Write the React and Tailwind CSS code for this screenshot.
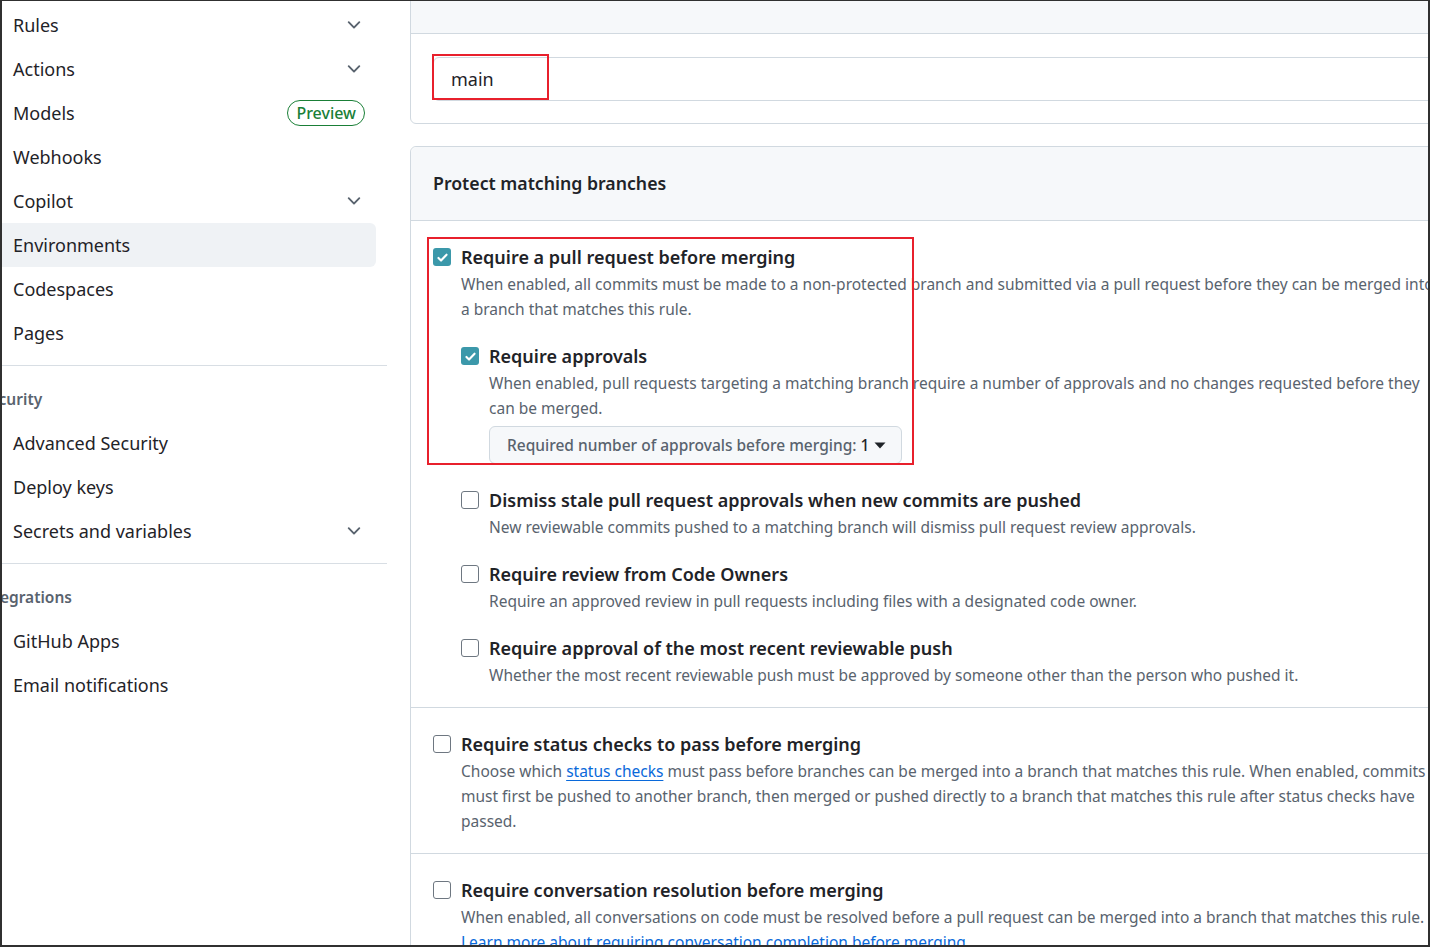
import React from 'react';

const font = { fontFamily: '"Noto Sans", "Open Sans", sans-serif' };

const Chevron = () => (
  <svg width="20" height="20" viewBox="0 0 16 16" fill="#59636e">
    <path d="M12.78 5.22a.749.749 0 0 1 0 1.06l-4.25 4.25a.749.749 0 0 1-1.06 0L3.22 6.28a.749.749 0 1 1 1.06-1.06L8 8.94l3.72-3.72a.749.749 0 0 1 1.06 0Z" />
  </svg>
);

function NavItem({ label, chevron, badge, active }) {
  return (
    <div
      className={`h-[44px] mr-[11px] pl-[11px] pr-[12px] flex items-center justify-between rounded-r-md text-[18px] text-[#1f2328] ${
        active ? 'bg-[#eff2f5]' : ''
      }`}
    >
      <span>{label}</span>
      {chevron && <Chevron />}
      {badge && (
        <span className="h-[26px] px-[8px] mr-[-1px] flex items-center rounded-full border border-[#1a7f37] text-[#1a7f37] text-[16px] font-medium">
          {badge}
        </span>
      )}
    </div>
  );
}

function NavHeading({ label, offset }) {
  return (
    <div className={`h-[44px] pt-[2px] flex items-center text-[15.5px] font-semibold text-[#59636e] ${offset}`}>
      {label}
    </div>
  );
}

function Sidebar() {
  return (
    <div className="w-[385px] shrink-0 overflow-hidden pt-[2px]">
      <NavItem label="Rules" chevron />
      <NavItem label="Actions" chevron />
      <NavItem label="Models" badge="Preview" />
      <NavItem label="Webhooks" />
      <NavItem label="Copilot" chevron />
      <NavItem label="Environments" active />
      <NavItem label="Codespaces" />
      <NavItem label="Pages" />
      <div className="h-px bg-[#d8dee4] mt-[10px] mb-[11px]" />
      <NavHeading label="Security" offset="ml-[-21px]" />
      <NavItem label="Advanced Security" />
      <NavItem label="Deploy keys" />
      <NavItem label="Secrets and variables" chevron />
      <div className="h-px bg-[#d8dee4] mt-[10px] mb-[11px]" />
      <NavHeading label="Integrations" offset="ml-[-24px]" />
      <NavItem label="GitHub Apps" />
      <NavItem label="Email notifications" />
    </div>
  );
}

function Checkbox({ checked }) {
  if (checked) {
    return (
      <span className="w-[18px] h-[18px] shrink-0 rounded-[3px] bg-[#3b98aa] flex items-center justify-center">
        <svg width="13" height="13" viewBox="0 0 16 16" fill="none" stroke="white" strokeWidth="2.6" strokeLinecap="round" strokeLinejoin="round">
          <path d="M3 8.5l3.2 3.2L13 4.5" />
        </svg>
      </span>
    );
  }
  return <span className="w-[18px] h-[18px] shrink-0 rounded-[3px] border-[1.5px] border-[#6e7781] bg-white" />;
}

function Option({ checked, label, lines, children }) {
  return (
    <div>
      <div className="flex items-center gap-[10px] h-[26px]">
        <Checkbox checked={checked} />
        <span className="text-[18px] font-semibold text-[#1f2328] whitespace-nowrap">{label}</span>
      </div>
      <div className="pl-[28px] mt-[2px] text-[15.5px] leading-[25px] text-[#59636e]">
        {lines.map((l, i) => (
          <div key={i} className="whitespace-nowrap">
            {l}
          </div>
        ))}
        {children}
      </div>
    </div>
  );
}

function Main() {
  return (
    <div className="ml-[23px] w-[1100px] shrink-0">
      {/* branch name pattern box */}
      <div className="mt-[-21px] border border-[#d1d9e0] rounded-md bg-white">
        <div className="h-[53px] bg-[#f6f8fa] border-b border-[#d1d9e0] rounded-t-md" />
        <div className="px-[22px] pt-[23px] pb-[22px]">
          <div className="relative h-[44px] border border-[#d1d9e0] rounded-md flex items-center pl-[17px] text-[18px] text-[#1f2328]">
            main
            <div className="absolute left-[-2px] top-[-4px] w-[117px] h-[46px] border-2 border-[#e8202c]" />
          </div>
        </div>
      </div>

      {/* protect matching branches */}
      <div className="mt-[22px] border border-[#d1d9e0] rounded-t-md bg-white">
        <div className="h-[74px] bg-[#f6f8fa] border-b border-[#d1d9e0] rounded-t-md flex items-center px-[22px]">
          <span className="text-[17.7px] font-semibold text-[#1f2328]">Protect matching branches</span>
        </div>

        <div className="relative px-[22px] pt-[23px] pb-[19px] border-b border-[#d1d9e0]">
          <div className="absolute left-[16px] top-[16px] w-[487px] h-[228px] border-2 border-[#e8202c] pointer-events-none" />
          <Option
            checked
            label="Require a pull request before merging"
            lines={[
              'When enabled, all commits must be made to a non-protected branch and submitted via a pull request before they can be merged into',
              'a branch that matches this rule.',
            ]}
          >
            <div className="flex flex-col gap-[21px] mt-[21px]">
              <Option
                checked
                label="Require approvals"
                lines={[
                  'When enabled, pull requests targeting a matching branch require a number of approvals and no changes requested before they',
                  'can be merged.',
                ]}
              >
                <div className="mt-[5px] mb-[2px] w-[413px] h-[38px] rounded-md border border-[#d1d9e0] bg-[#f6f8fa] flex items-center pl-[17px] gap-[5px] text-[15.5px] font-medium text-[#59636e]">
                  <span>Required number of approvals before merging:</span>
                  <span className="text-[#1f2328] ml-[-1px]">1</span>
                  <svg width="12" height="7" viewBox="0 0 12 7" fill="#1f2328">
                    <polygon points="0.5,0.5 11.5,0.5 6,6.5" />
                  </svg>
                </div>
              </Option>
              <Option
                label="Dismiss stale pull request approvals when new commits are pushed"
                lines={['New reviewable commits pushed to a matching branch will dismiss pull request review approvals.']}
              />
              <Option
                label="Require review from Code Owners"
                lines={['Require an approved review in pull requests including files with a designated code owner.']}
              />
              <Option
                label="Require approval of the most recent reviewable push"
                lines={['Whether the most recent reviewable push must be approved by someone other than the person who pushed it.']}
              />
            </div>
          </Option>
        </div>

        <div className="px-[22px] pt-[23px] pb-[19px] border-b border-[#d1d9e0]">
          <Option
            label="Require status checks to pass before merging"
            lines={[
              <span key="a">
                Choose which <a className="text-[#0969da] underline underline-offset-[3px]">status checks</a> must pass before branches can be merged into a branch that matches this rule. When enabled, commits
              </span>,
              'must first be pushed to another branch, then merged or pushed directly to a branch that matches this rule after status checks have',
              'passed.',
            ]}
          />
        </div>

        <div className="px-[22px] pt-[23px] pb-[20px]">
          <Option
            label="Require conversation resolution before merging"
            lines={[
              'When enabled, all conversations on code must be resolved before a pull request can be merged into a branch that matches this rule.',
              <a key="b" className="text-[#0969da] underline underline-offset-[3px]">
                Learn more about requiring conversation completion before merging
              </a>,
            ]}
          />
        </div>
      </div>
    </div>
  );
}

export default function App() {
  return (
    <div
      style={font}
      className="w-[1430px] h-[947px] overflow-hidden bg-white border-l-2 border-t border-r-2 border-b-2 border-[#303030] flex"
    >
      <Sidebar />
      <Main />
    </div>
  );
}
